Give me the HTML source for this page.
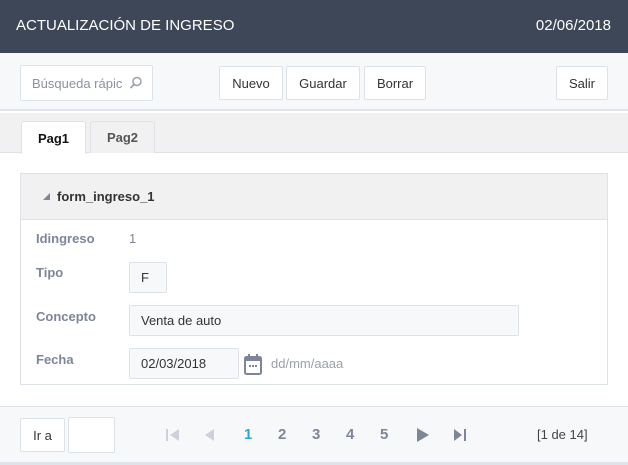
<!DOCTYPE html>
<html><head><meta charset="utf-8"><style>
*{box-sizing:border-box;margin:0;padding:0}
body{width:628px;height:465px;overflow:hidden;font-family:"Liberation Sans",sans-serif;background:#fff;position:relative;font-size:13px}
.a{position:absolute}
.hdr{left:0;top:0;width:628px;height:53px;background:#3d4757;color:#fff;font-size:15px}
.tb{left:0;top:53px;width:628px;height:58px;background:#f7f8fa;border-bottom:2px solid #dfe3ea}
.btn{background:#fff;border:1px solid #dde2e8;border-radius:2px;color:#333;font-size:13px;display:flex;align-items:center;justify-content:center}
.tabs{left:0;top:113px;width:628px;height:40px;background:#f1f1f1;border-bottom:1px solid #dde2e8}
.tab{top:121px;height:32px;border:1px solid #dde2e8;border-bottom:none;border-radius:3px 3px 0 0;font-weight:bold;font-size:13px;display:flex;align-items:center;justify-content:center}
.lbl{left:36px;color:#7d8699;font-weight:bold;font-size:13px}
.inp{background:#f7f8fa;border:1px solid #dde2e8;border-radius:2px;color:#333;font-size:13px;padding-left:11px;display:flex;align-items:center}
.pg{top:426px;font-weight:bold;font-size:15px;color:#7d8699}
</style></head><body>
<div class="a hdr"><span class="a" style="left:16px;top:17px">ACTUALIZACIÓN DE INGRESO</span><span class="a" style="right:17px;top:17px">02/06/2018</span></div>
<div class="a tb"></div>
<div class="a btn" style="left:20px;top:65px;width:133px;height:36px;justify-content:flex-start;padding-left:11px;color:#8a92a0">Búsqueda rápic
<svg class="a" style="left:108px;top:10px" width="14" height="14" viewBox="0 0 14 14"><circle cx="8" cy="5.5" r="4" fill="none" stroke="#9aa1ad" stroke-width="1.5"/><line x1="5" y1="8.5" x2="1.5" y2="12" stroke="#9aa1ad" stroke-width="1.8"/></svg></div>
<div class="a btn" style="left:219px;top:66px;width:64px;height:34px">Nuevo</div>
<div class="a btn" style="left:286px;top:66px;width:74px;height:34px">Guardar</div>
<div class="a btn" style="left:364px;top:66px;width:62px;height:34px">Borrar</div>
<div class="a btn" style="left:556px;top:66px;width:52px;height:34px">Salir</div>
<div class="a tabs"></div>
<div class="a tab" style="left:21px;width:65px;background:#fff;height:33px;color:#111">Pag1</div>
<div class="a tab" style="left:90px;width:65px;background:#f1f1f1;color:#555">Pag2</div>
<div class="a" style="left:20px;top:173px;width:588px;height:212px;border:1px solid #dde2e8"></div>
<div class="a" style="left:21px;top:174px;width:586px;height:46px;background:#f1f1f1;border-bottom:1px solid #dde2e8"></div>
<svg class="a" style="left:43px;top:193px" width="8" height="8"><polygon points="7,0 7,7 0,7" fill="#7d8699"/></svg>
<div class="a" style="left:57px;top:189px;font-weight:bold;font-size:13px;color:#333">form_ingreso_1</div>
<div class="a lbl" style="top:231px">Idingreso</div><div class="a" style="left:129px;top:231px;color:#7d8699">1</div>
<div class="a lbl" style="top:265px">Tipo</div><div class="a inp" style="left:129px;top:262px;width:38px;height:31px">F</div>
<div class="a lbl" style="top:309px">Concepto</div><div class="a inp" style="left:129px;top:305px;width:390px;height:31px">Venta de auto</div>
<div class="a lbl" style="top:352px">Fecha</div><div class="a inp" style="left:129px;top:348px;width:110px;height:31px">02/03/2018</div>
<svg class="a" style="left:244px;top:354px" width="18" height="21" viewBox="0 0 18 21"><rect x="1" y="3" width="16" height="17" rx="1.5" fill="none" stroke="#7d8699" stroke-width="2"/><rect x="1" y="3" width="16" height="4" fill="#7d8699"/><rect x="4" y="0" width="2" height="4" fill="#7d8699"/><rect x="12" y="0" width="2" height="4" fill="#7d8699"/><rect x="5" y="11" width="2" height="2" fill="#7d8699"/><rect x="8" y="11" width="2" height="2" fill="#7d8699"/><rect x="11" y="11" width="2" height="2" fill="#7d8699"/></svg>
<div class="a" style="left:271px;top:356px;color:#9aa1ad">dd/mm/aaaa</div>
<div class="a" style="left:0;top:406px;width:628px;height:56px;background:#f7f8fa;border-top:1px solid #dde2e8;border-bottom:3px solid #dfe3ea;height:59px"></div>
<div class="a btn" style="left:20px;top:418px;width:45px;height:34px">Ir a</div>
<div class="a btn" style="left:68px;top:417px;width:47px;height:36px"></div>
<svg class="a" style="left:166px;top:428px" width="14" height="14"><rect x="0" y="1" width="2" height="12" fill="#cdd2da"/><polygon points="13,1 13,13 4,7" fill="#cdd2da"/></svg>
<svg class="a" style="left:203px;top:428px" width="12" height="14"><polygon points="11,1 11,13 2,7" fill="#cdd2da"/></svg>
<div class="a pg" style="left:244px;color:#2aa5e0">1</div>
<div class="a pg" style="left:278px">2</div>
<div class="a pg" style="left:312px">3</div>
<div class="a pg" style="left:346px">4</div>
<div class="a pg" style="left:380px">5</div>
<svg class="a" style="left:416px;top:428px" width="14" height="14"><polygon points="1,0 1,14 13,7" fill="#7d8699"/></svg>
<svg class="a" style="left:453px;top:428px" width="14" height="14"><polygon points="1,1 1,13 9,7" fill="#7d8699"/><rect x="11" y="1" width="2" height="12" fill="#7d8699"/></svg>
<div class="a" style="left:537px;top:427px;color:#444">[1 de 14]</div>
</body></html>
